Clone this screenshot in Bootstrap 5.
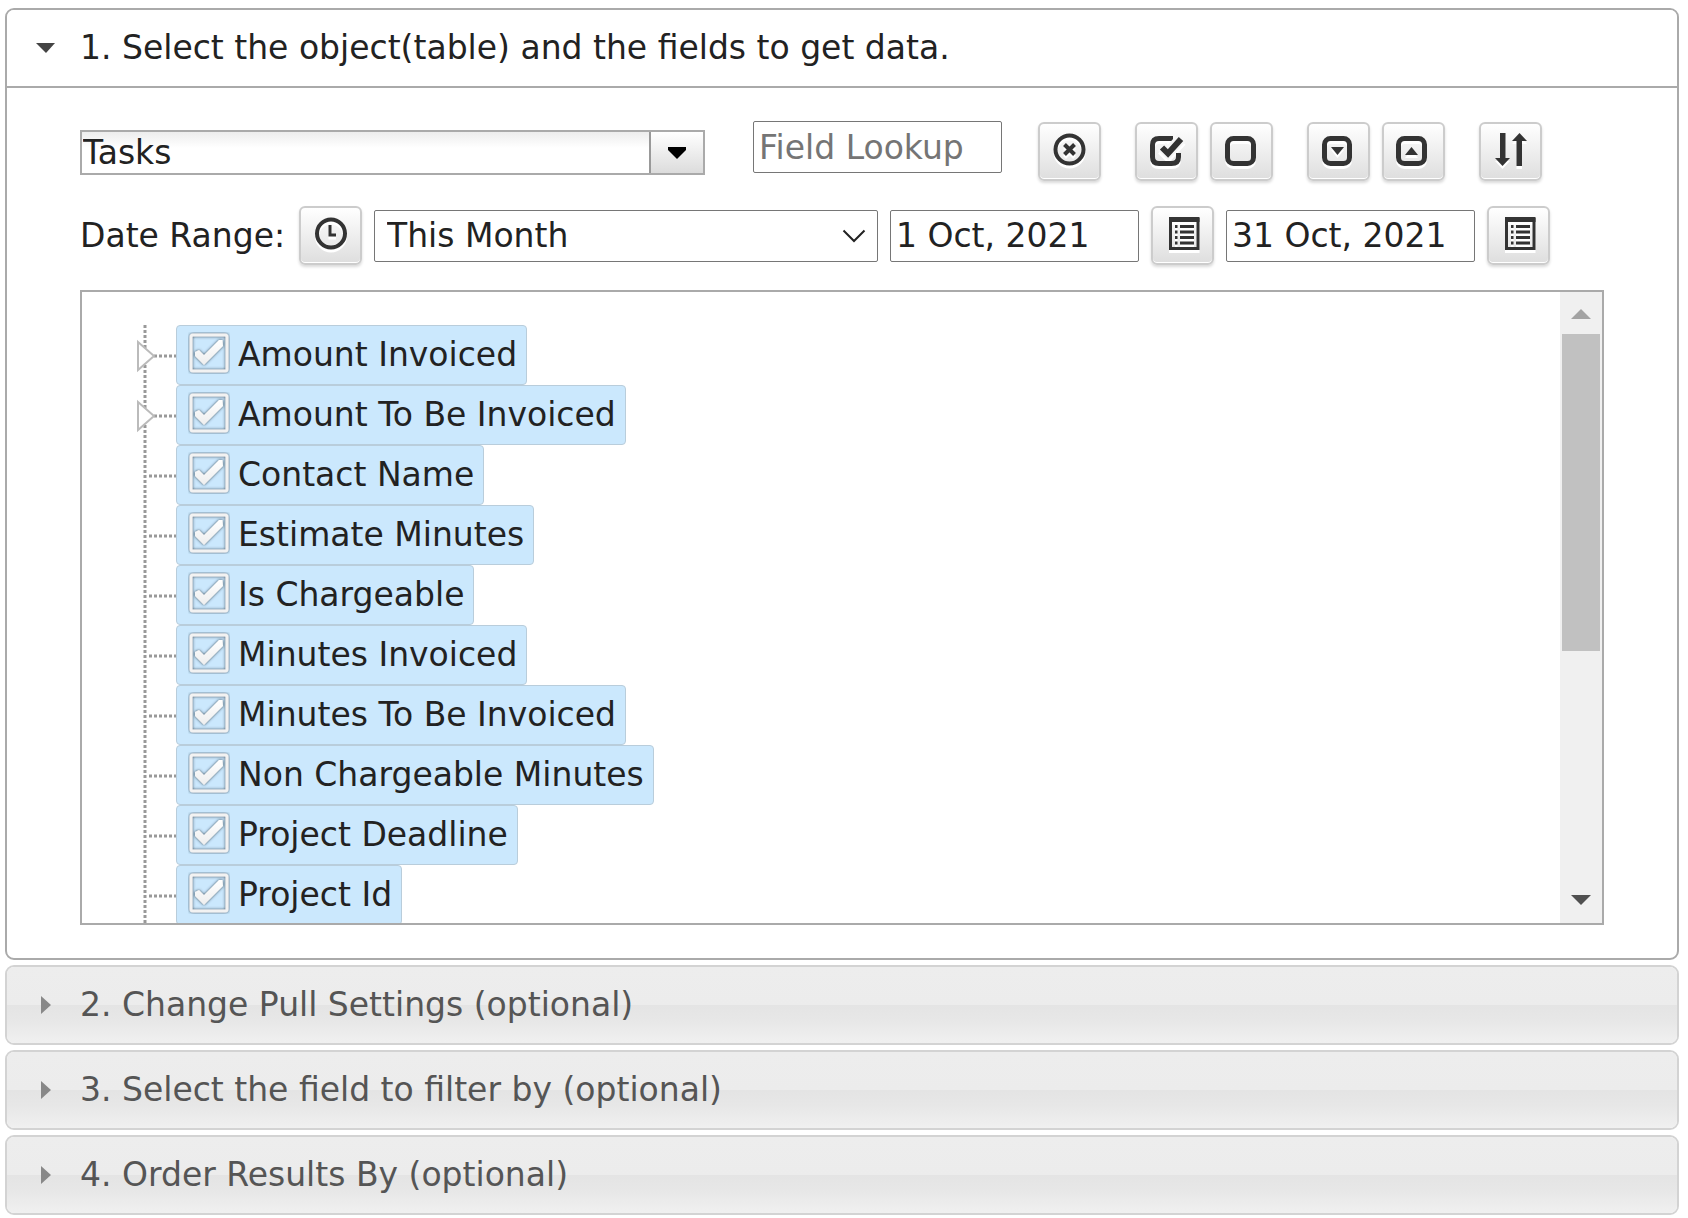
<!DOCTYPE html>
<html lang="en">
<head>
<meta charset="utf-8">
<meta name="viewport" content="width=device-width, initial-scale=1">
<title>Get data</title>
<link href="https://cdn.jsdelivr.net/npm/bootstrap@5.3.0/dist/css/bootstrap.min.css" rel="stylesheet">
<style>
  body { font-family: Verdana, "DejaVu Sans", sans-serif; font-size: 33px; line-height: 40px; color: #222; background: #fff; padding: 8px 9px 3px 5px; }
  .sections { display: flex; flex-direction: column; gap: 5px; }
  .section-item { border: 2px solid #d3d3d3; border-radius: 9px; overflow: hidden; }
  .section-item.is-open { border-color: #aaa; }
  .section-head { display: flex; align-items: center; width: 100%; height: 76px; padding: 0 0 0 27px; border: 0; text-align: left; color: #555;
    background: linear-gradient(#ededed 0, #ececec 50%, #e4e4e4 50%, #e7e7e7 70%, #f0f0f0 100%); }
  .section-head svg { width: 24px; height: 24px; margin-right: 22px; flex: none; }
  .is-open .section-head { color: #222; background: #fff; }
  .section-body { border-top: 2px solid #aaa; padding: 33px 73px; }

  .tool-set { gap: 12px; margin-left: 34px; }
  .tool-btn { width: 63px; height: 59px; padding: 0; flex: none; border: 2px solid #ccc; border-radius: 6px; background: linear-gradient(#fff, #dedede); box-shadow: inset 0 -1px #fff, 0 2px 3px rgba(0,0,0,.15); }
  .tool-btn svg { display: block; width: 59px; height: 55px; fill: none; stroke: #333; filter: drop-shadow(0 3px 0 #fff); }
  .solid-shape { fill: #333; stroke: none; }

  .text-box { height: 52px; width: 249px; padding: 0 5px; flex: none; border: 1px solid #767676; border-radius: 2px; color: #222; background: #fff; }
  .text-box::placeholder { color: #757575; opacity: 1; }
  .combo-box { width: 625px; height: 45px; flex: none; margin-bottom: 6px; border: 2px solid #aaa; background: linear-gradient(#ededed 0, #fff 16px); }
  .combo-box input { min-width: 0; flex: 1; padding: 0 1px; border: 0; background: transparent; color: #222; }
  .combo-box button { width: 54px; padding: 0; border: 0; border-left: 2px solid #999; background: linear-gradient(#fff, #dcdcdc); display: flex; align-items: center; justify-content: center; }
  .lookup-box { margin: 0 36px 8px 48px; }

  .date-row { gap: 12px; margin: 25px 0; }
  .date-label { width: 207px; white-space: nowrap; flex: none; }
  .range-select { width: 504px; height: 52px; flex: none; padding: 0 40px 0 12px; border: 1px solid #767676; border-radius: 2px; color: #222; appearance: none;
    background: #fff url("data:image/svg+xml,%3Csvg xmlns='http://www.w3.org/2000/svg' width='24' height='14'%3E%3Cpath d='M1.5 1.5L12 12L22.5 1.5' fill='none' stroke='%23222' stroke-width='2'/%3E%3C/svg%3E") no-repeat right 11px center; }

  .field-box { height: 635px; border: 2px solid #aaa; }
  .field-tree { list-style: none; margin: 0; padding: 33px 0 0 62px; overflow: hidden; flex: 1; }
  .field-tree li { display: flex; height: 60px; }
  .branch { width: 32px; height: 60px; flex: none; overflow: visible; }
  .field-pill { display: flex; align-items: center; height: 60px; padding: 0 9px 0 11px; border: 1px solid #b9cddb; border-radius: 4px; background: #cbe8fd; white-space: nowrap; }
  .field-pill input { appearance: none; width: 42px; height: 42px; margin: 0 8px 4px 0; flex: none;
    background: url("data:image/svg+xml,%3Csvg xmlns='http://www.w3.org/2000/svg' width='42' height='42'%3E%3Cdefs%3E%3Cfilter id='s' x='-20%25' y='-20%25' width='140%25' height='140%25'%3E%3CfeDropShadow dx='0' dy='0' stdDeviation='1.4' flood-color='%23345' flood-opacity='1'/%3E%3C/filter%3E%3ClinearGradient id='g' x2='0' y2='1'%3E%3Cstop stop-color='%23fff'/%3E%3Cstop offset='1' stop-color='%23eee'/%3E%3C/linearGradient%3E%3C/defs%3E%3Cg filter='url(%23s)'%3E%3Crect x='3' y='3' width='36' height='36' rx='2' fill='none' stroke='%23f2f2f2' stroke-width='3'/%3E%3Cpath d='M7 20L11 18L16 23L31 8L34.5 8L35 14L16 33L7 24Z' fill='url(%23g)'/%3E%3C/g%3E%3C/svg%3E"); }
  .scroll-track { width: 42px; background: #f0f0f0; padding: 17px 2px 18px; flex: none; }
  .scroll-thumb { height: 317px; margin: 15px 0 auto; background: #c1c1c1; }
</style>
<script src="https://cdn.jsdelivr.net/npm/bootstrap@5.3.0/dist/js/bootstrap.bundle.min.js"></script>
</head>
<body>
<main class="sections">
  <section class="section-item is-open">
    <button class="section-head" type="button" data-bs-toggle="collapse" data-bs-target="#objectPane" aria-expanded="true">
      <svg viewBox="0 0 24 24" aria-hidden="true"><path d="M2 7H21L12 17Z" fill="#444"/></svg>
      1. Select the object(table) and the fields to get data.
    </button>
    <div id="objectPane" class="collapse show">
      <div class="section-body">
        <div class="d-flex align-items-end">
          <div class="combo-box d-flex">
            <input type="text" value="Tasks" aria-label="Object">
            <button type="button" aria-label="Show objects"><svg width="18" height="12" aria-hidden="true"><path d="M0 0H18V3L9 12L0 3Z"/></svg></button>
          </div>
          <input class="text-box lookup-box" type="text" placeholder="Field Lookup" aria-label="Field Lookup">
          <button class="tool-btn" type="button" aria-label="Clear lookup"><svg aria-hidden="true"><circle cx="29.5" cy="25.5" r="14" stroke-width="4"/><path d="M24.5 20.5l10 10m0-10l-10 10" stroke-width="4"/></svg></button>
          <div class="d-flex tool-set">
            <button class="tool-btn" type="button" aria-label="Check all"><svg aria-hidden="true"><path d="M36 14.5H22Q15.5 14.5 15.5 21V33Q15.5 39.5 22 39.5H34.5Q41.5 39.5 41.5 33V29" stroke-width="5"/><path d="M25 22.500L31 28.500L44.500 14" stroke="#f6f6f6" stroke-width="11"/><path d="M25 23.5L31 29.5L44 15" stroke-width="6"/></svg></button>
            <button class="tool-btn" type="button" aria-label="Uncheck all"><svg aria-hidden="true"><rect x="15.5" y="14.5" width="26" height="25" rx="6" stroke-width="5"/></svg></button>
          </div>
          <div class="d-flex tool-set">
            <button class="tool-btn" type="button" aria-label="Expand all"><svg aria-hidden="true"><rect x="15.5" y="14.5" width="25" height="25" rx="6" stroke-width="5"/><path class="solid-shape" d="M22 23H35L28.5 31Z"/></svg></button>
            <button class="tool-btn" type="button" aria-label="Collapse all"><svg aria-hidden="true"><rect x="14.5" y="14.5" width="26" height="25" rx="6" stroke-width="5"/><path class="solid-shape" d="M21 31H34L27.5 23Z"/></svg></button>
          </div>
          <div class="d-flex tool-set">
            <button class="tool-btn" type="button" aria-label="Sort fields"><svg aria-hidden="true"><path class="solid-shape" d="M19 9H24.5V34H29L21.5 42L14 34H19ZM35.5 42V17H31L38.5 9L46 17H41V42Z"/></svg></button>
          </div>
        </div>

        <div class="d-flex align-items-center date-row">
          <label for="range" class="date-label">Date Range:</label>
          <button class="tool-btn" type="button" aria-label="Time"><svg aria-hidden="true"><circle cx="30" cy="25.5" r="14" stroke-width="4"/><path d="M29 17V27H35" stroke-width="3"/></svg></button>
          <select id="range" class="range-select"><option>This Month</option></select>
          <input class="text-box" type="text" value="1 Oct, 2021" aria-label="From">
          <button class="tool-btn" type="button" aria-label="Pick start date"><svg aria-hidden="true"><path d="M17.5 10V40.5H45V10" stroke-width="3"/><path d="M16 11.5H46.5" stroke-width="5"/><path d="M22 18.5H24.5M27 18.5H41M22 24H24.5M27 24H41M22 29.5H24.5M27 29.5H41M22 35H24.5M27 35H41" stroke-width="3"/></svg></button>
          <input class="text-box" type="text" value="31 Oct, 2021" aria-label="To">
          <button class="tool-btn" type="button" aria-label="Pick end date"><svg aria-hidden="true"><path d="M17.5 10V40.5H45V10" stroke-width="3"/><path d="M16 11.5H46.5" stroke-width="5"/><path d="M22 18.5H24.5M27 18.5H41M22 24H24.5M27 24H41M22 29.5H24.5M27 29.5H41M22 35H24.5M27 35H41" stroke-width="3"/></svg></button>
        </div>

        <div class="field-box d-flex">
          <ul class="field-tree" id="fieldTree"></ul>
          <div class="scroll-track d-flex flex-column align-items-stretch">
            <svg class="align-self-center" width="20" height="10" aria-hidden="true"><path d="M0 10L10 0L20 10Z" fill="#a3a3a3"/></svg>
            <div class="scroll-thumb"></div>
            <svg class="align-self-center" width="20" height="10" aria-hidden="true"><path d="M0 0L10 10L20 0Z" fill="#505050"/></svg>
          </div>
        </div>
      </div>
    </div>
  </section>

  <section class="section-item">
    <button class="section-head" type="button" aria-expanded="false"><svg viewBox="0 0 24 24" aria-hidden="true"><path d="M7 3L17 12L7 21Z" fill="#888"/></svg>2. Change Pull Settings (optional)</button>
  </section>
  <section class="section-item">
    <button class="section-head" type="button" aria-expanded="false"><svg viewBox="0 0 24 24" aria-hidden="true"><path d="M7 3L17 12L7 21Z" fill="#888"/></svg>3. Select the field to filter by (optional)</button>
  </section>
  <section class="section-item">
    <button class="section-head" type="button" aria-expanded="false"><svg viewBox="0 0 24 24" aria-hidden="true"><path d="M7 3L17 12L7 21Z" fill="#888"/></svg>4. Order Results By (optional)</button>
  </section>
</main>
<script>
  const fields = ["Amount Invoiced", "Amount To Be Invoiced", "Contact Name", "Estimate Minutes", "Is Chargeable",
    "Minutes Invoiced", "Minutes To Be Invoiced", "Non Chargeable Minutes", "Project Deadline", "Project Id"];
  const expandable = 2;
  document.getElementById("fieldTree").innerHTML = fields.map((name, i) => `
    <li>
      <svg class="branch" aria-hidden="true">
        <path d="M1 0V60" stroke="#999" stroke-width="3" stroke-dasharray="3 2" fill="none"/>
        <path d="M5 31H32" stroke="#999" stroke-width="3" stroke-dasharray="3 2" fill="none"/>
        ${i < expandable ? '<path d="M-6 17L10 31L-6 45Z" fill="#fff" stroke="#bbb" stroke-width="2"/>' : ''}
      </svg>
      <label class="field-pill"><input type="checkbox" checked>${name}</label>
    </li>`).join("");
</script>
</body>
</html>
